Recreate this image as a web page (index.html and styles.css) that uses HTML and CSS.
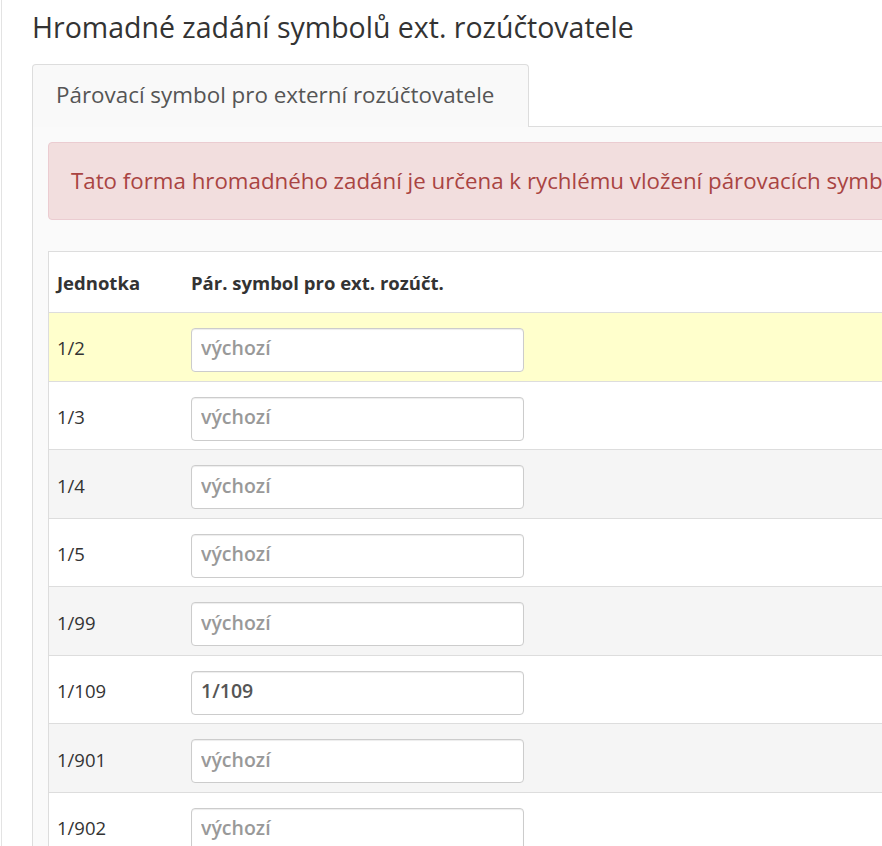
FILE: index.html
```html
<!DOCTYPE html>
<html lang="cs">
<head>
<meta charset="utf-8">
<title>Hromadné zadání symbolů ext. rozúčtovatele</title>
<link rel="stylesheet" href="styles.css">
</head>
<body>
<div class="page">
  <h1 class="title">Hromadné zadání symbolů ext. rozúčtovatele</h1>
  <div class="tabs">
    <div class="tab active">Párovací symbol pro externí rozúčtovatele</div>
  </div>
  <div class="panel">
    <div class="alert">Tato forma hromadného zadání je určena k rychlému vložení párovacích symbolů pro externí rozúčtovatele.</div>
    <table class="grid">
      <thead>
        <tr><th class="col-unit">Jednotka</th><th>Pár. symbol pro ext. rozúčt.</th></tr>
      </thead>
      <tbody>
        <tr class="hl"><td>1/2</td><td><input class="field" type="text" placeholder="výchozí"></td></tr>
        <tr><td>1/3</td><td><input class="field" type="text" placeholder="výchozí"></td></tr>
        <tr><td>1/4</td><td><input class="field" type="text" placeholder="výchozí"></td></tr>
        <tr><td>1/5</td><td><input class="field" type="text" placeholder="výchozí"></td></tr>
        <tr><td>1/99</td><td><input class="field" type="text" placeholder="výchozí"></td></tr>
        <tr><td>1/109</td><td><input class="field" type="text" placeholder="výchozí" value="1/109"></td></tr>
        <tr><td>1/901</td><td><input class="field" type="text" placeholder="výchozí"></td></tr>
        <tr><td>1/902</td><td><input class="field" type="text" placeholder="výchozí"></td></tr>
      </tbody>
    </table>
  </div>
</div>
</body>
</html>
```
FILE: styles.css
```css
html, body {
  margin: 0;
  padding: 0;
  background: #fff;
  overflow: hidden;
  height: 846px;
}
body {
  font-family: "Open Sans", "Liberation Sans", sans-serif;
  color: #333;
}
.page {
  margin-left: 1px;
  border-left: 1px solid #e3e3e3;
  padding-left: 30px;
  width: 1400px;
  height: 846px;
  overflow: hidden;
}
.title {
  font-size: 28.5px;
  font-weight: 400;
  line-height: 31px;
  margin: 12.4px 0 20.6px 0;
  color: #333;
}
.tabs {
  display: flex;
  border-bottom: 1px solid #ddd;
}
.tab {
  font-size: 22.4px;
  line-height: 30px;
  color: #555;
  background: #f9f9f9;
  border: 1px solid #ddd;
  border-bottom: none;
  border-radius: 4px 4px 0 0;
  padding: 15px 34px 17px 23px;
  margin-bottom: -1px;
}
.panel {
  background: #fafafa;
  border-left: 1px solid #ddd;
  padding: 15px 0 0 15px;
  height: 800px;
}
.alert {
  background: #f2dede;
  border: 1px solid #ebccd1;
  border-radius: 4px;
  color: #a94442;
  font-size: 22.3px;
  line-height: 32px;
  padding: 21.8px 22px 22.2px 22px;
  white-space: nowrap;
  margin-bottom: 31px;
}
.grid {
  border-collapse: collapse;
  background: #fff;
  border: 1px solid #ddd;
  width: 1200px;
  font-size: 18.5px;
}
.grid th {
  text-align: left;
  font-weight: 700;
  line-height: 26px;
  padding: 18px 8px 16px 8px;
  border-bottom: 1px solid #ddd;
}
.col-unit {
  width: 118px;
}
.grid td {
  line-height: 26px;
  padding: 15px 8px 8.55px 8px;
  border-top: 1px solid #ddd;
  vertical-align: baseline;
}
.grid tbody tr:nth-child(odd) td {
  background: #f5f5f5;
}
.grid tbody tr.hl td {
  background: #ffffcc;
}
.field {
  box-sizing: border-box;
  width: 333px;
  height: 44px;
  padding: 6px 9px 10px 9px;
  border: 1px solid #ccc;
  border-radius: 4px;
  background: #fff;
  font-family: "Open Sans", "Liberation Sans", sans-serif;
  font-size: 19.5px;
  font-weight: 600;
  color: #555;
  box-shadow: inset 0 1px 1px rgba(0,0,0,0.075);
}
.field::placeholder {
  color: #999;
  opacity: 1;
}
```
